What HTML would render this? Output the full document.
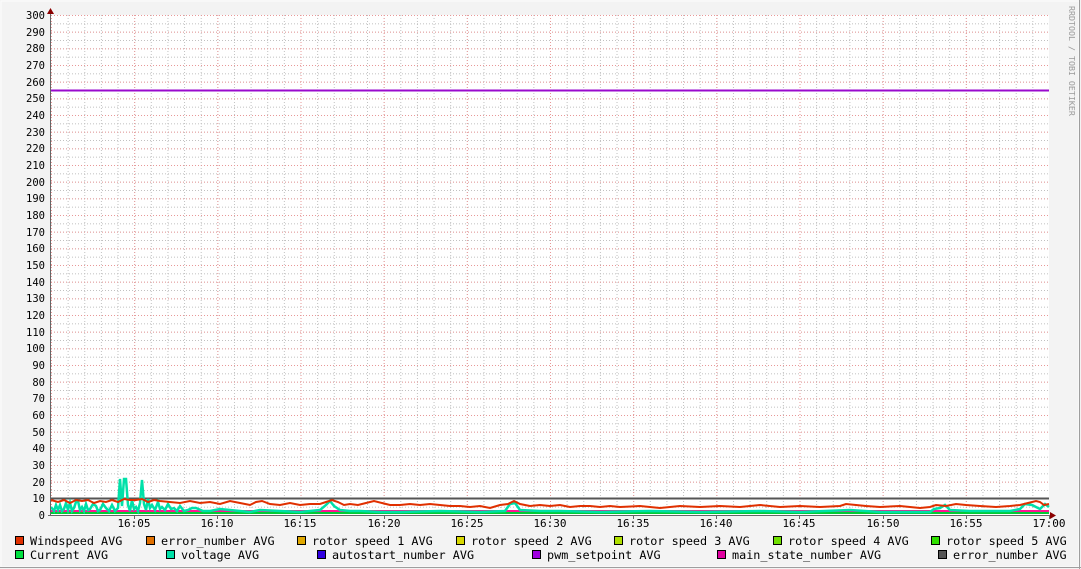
<!DOCTYPE html>
<html><head><meta charset="utf-8"><style>
html,body{margin:0;padding:0;background:#f3f3f3;}
svg{display:block;font-family:"DejaVu Sans Mono","Liberation Mono",monospace;}
</style></head><body>
<svg width="1081" height="569" xmlns="http://www.w3.org/2000/svg">
<defs>
<pattern id="hmin" x="0" y="15" width="1081" height="8.3333" patternUnits="userSpaceOnUse">
<line x1="0" y1="0.5" x2="1081" y2="0.5" stroke="#c0c0c0" stroke-width="1" stroke-dasharray="1,2"/>
</pattern>
<pattern id="vmin" x="51" y="0" width="16.633" height="600" patternUnits="userSpaceOnUse">
<line x1="0.5" y1="0" x2="0.5" y2="600" stroke="#c0c0c0" stroke-width="1" stroke-dasharray="1,2"/>
</pattern>
<pattern id="hmaj" x="0" y="15" width="1081" height="16.6667" patternUnits="userSpaceOnUse">
<line x1="0" y1="0.5" x2="1081" y2="0.5" stroke="#e89898" stroke-width="1" stroke-dasharray="1,2"/>
</pattern>
<pattern id="vmaj" x="51" y="0" width="83.167" height="600" patternUnits="userSpaceOnUse">
<line x1="0.5" y1="0" x2="0.5" y2="600" stroke="#e89898" stroke-width="1" stroke-dasharray="1,2"/>
</pattern>
</defs>
<rect x="0" y="0" width="1081" height="569" fill="#f3f3f3"/>
<rect x="1" y="1" width="1078" height="566" fill="none" stroke="#fcfcfc" stroke-width="1"/>
<line x1="1079.5" y1="0" x2="1079.5" y2="569" stroke="#9e9e9e"/>
<line x1="0" y1="567.5" x2="1081" y2="567.5" stroke="#9e9e9e"/>
<rect x="51" y="15" width="998" height="500" fill="#ffffff"/>
<rect x="51" y="15" width="998" height="500" fill="url(#hmin)"/>
<rect x="51" y="15" width="998" height="500" fill="url(#vmin)"/>
<rect x="51" y="15" width="998" height="500" fill="url(#hmaj)"/>
<rect x="51" y="15" width="998" height="500" fill="url(#vmaj)"/>
<line x1="51" y1="90.5" x2="1049" y2="90.5" stroke="#9a0acd" stroke-width="2"/>
<line x1="51" y1="498.5" x2="1049" y2="498.5" stroke="#555555" stroke-width="2"/>
<line x1="51" y1="513" x2="1049" y2="513" stroke="#00cc33" stroke-width="2"/>
<line x1="51" y1="511" x2="1049" y2="511" stroke="#ff1493" stroke-width="2"/>
<polyline fill="none" stroke="#00e0a8" stroke-width="2.5" points="51,507 54,511 56,505 58,510 60,505 62,511 64,509 66,503 68,510 70,503 72,511 74,508 76,502 78,501 80,510 82,507 84,511 86,504 88,510 90,509 93,504 96,506 98,511 100,510 103,504 106,508 109,511 112,505 115,511 118,508 120,479 122,506 124,479 126,479 128,505 130,511 132,500 134,509 136,507 138,511 140,503 142,480 144,504 146,510 148,499 150,508 152,505 155,510 158,502 160,509 162,507 165,510 168,504 171,509 174,508 177,511 180,506 184,511 188,510 192,508 196,508 203,511 210,511 220,509 230,510 240,511 250,512 260,510 280,511 300,512 310,511 320,510 326,505 330,501 334,506 340,510 350,511 360,511 380,512 400,512 440,511 480,512 505,511 510,504 515,503 520,510 540,511 560,511 600,512 650,511 700,512 760,511 800,512 850,510 880,512 930,512 934,509 940,508 945,505 950,510 970,511 990,511 1010,511 1020,509 1025,504 1032,505 1036,507 1040,509 1045,504 1049,507"/>
<polyline fill="none" stroke="#e03000" stroke-width="2" points="51,500 58,502 64,500 70,503 76,500 82,501 88,500 94,503 100,501 106,502 112,500 118,502 124,499 130,500 136,500 142,499 148,502 154,500 160,501 170,502 180,503 190,501 200,503 210,502 220,504 230,501 240,503 250,505 256,502 262,501 270,504 280,505 290,503 300,505 310,504 320,504 326,502 332,500 338,502 344,505 350,504 358,505 366,503 374,501 382,503 390,505 400,505 410,504 420,505 430,504 440,505 450,506 460,506 470,507 480,506 490,508 500,505 508,504 514,501 520,504 530,506 540,505 550,506 560,505 570,507 580,506 590,506 600,507 610,506 620,507 640,506 660,508 680,506 700,507 720,506 740,507 760,505 780,507 800,506 820,507 840,506 846,504 856,505 866,506 880,507 900,506 920,508 930,507 936,505 946,506 956,504 966,505 980,506 996,507 1010,506 1020,505 1028,503 1036,501 1040,502 1044,505 1049,504"/>
<line x1="50.5" y1="10" x2="50.5" y2="516" stroke="#666" stroke-width="1"/>
<line x1="48" y1="515.5" x2="1052" y2="515.5" stroke="#666" stroke-width="1"/>
<polygon points="47,14 54,14 50.5,8" fill="#8b0000"/>
<polygon points="1050,512 1050,519 1056,515.5" fill="#8b0000"/>
<g stroke="#666" stroke-width="1">
<line x1="134.5" y1="515" x2="134.5" y2="519"/><line x1="217.5" y1="515" x2="217.5" y2="519"/><line x1="300.5" y1="515" x2="300.5" y2="519"/><line x1="384.5" y1="515" x2="384.5" y2="519"/><line x1="467.5" y1="515" x2="467.5" y2="519"/><line x1="550.5" y1="515" x2="550.5" y2="519"/><line x1="633.5" y1="515" x2="633.5" y2="519"/><line x1="716.5" y1="515" x2="716.5" y2="519"/><line x1="799.5" y1="515" x2="799.5" y2="519"/><line x1="883.5" y1="515" x2="883.5" y2="519"/><line x1="966.5" y1="515" x2="966.5" y2="519"/><line x1="1049.5" y1="515" x2="1049.5" y2="519"/>
</g>
<g font-size="10.5" fill="#000" text-anchor="end">
<text x="45" y="19">300</text><text x="45" y="36">290</text><text x="45" y="52">280</text><text x="45" y="69">270</text><text x="45" y="86">260</text><text x="45" y="102">250</text><text x="45" y="119">240</text><text x="45" y="136">230</text><text x="45" y="152">220</text><text x="45" y="169">210</text><text x="45" y="186">200</text><text x="45" y="202">190</text><text x="45" y="219">180</text><text x="45" y="236">170</text><text x="45" y="252">160</text><text x="45" y="269">150</text><text x="45" y="286">140</text><text x="45" y="302">130</text><text x="45" y="319">120</text><text x="45" y="336">110</text><text x="45" y="352">100</text><text x="45" y="369">90</text><text x="45" y="386">80</text><text x="45" y="402">70</text><text x="45" y="419">60</text><text x="45" y="436">50</text><text x="45" y="452">40</text><text x="45" y="469">30</text><text x="45" y="486">20</text><text x="45" y="502">10</text><text x="45" y="519">0</text>
</g>
<g font-size="11" fill="#000" text-anchor="middle">
<text x="134" y="527">16:05</text><text x="217" y="527">16:10</text><text x="300" y="527">16:15</text><text x="384" y="527">16:20</text><text x="467" y="527">16:25</text><text x="550" y="527">16:30</text><text x="633" y="527">16:35</text><text x="716" y="527">16:40</text><text x="799" y="527">16:45</text><text x="883" y="527">16:50</text><text x="966" y="527">16:55</text><text x="1049" y="527">17:00</text>
</g>
<text x="1069" y="6" font-size="8.3" fill="#999" transform="rotate(90 1069 6)">RRDTOOL / TOBI OETIKER</text>
<g stroke="#000" stroke-width="1">
<rect x="15.5" y="536.5" width="8" height="8" fill="#e03000"/>
<rect x="146.5" y="536.5" width="8" height="8" fill="#e07000"/>
<rect x="297.5" y="536.5" width="8" height="8" fill="#e0a800"/>
<rect x="456.5" y="536.5" width="8" height="8" fill="#d8d800"/>
<rect x="614.5" y="536.5" width="8" height="8" fill="#b0e000"/>
<rect x="773.5" y="536.5" width="8" height="8" fill="#70e000"/>
<rect x="931.5" y="536.5" width="8" height="8" fill="#30e000"/>
<rect x="15.5" y="550.5" width="8" height="8" fill="#00e040"/>
<rect x="166.5" y="550.5" width="8" height="8" fill="#00e0a8"/>
<rect x="317.5" y="550.5" width="8" height="8" fill="#3000e0"/>
<rect x="532.5" y="550.5" width="8" height="8" fill="#a000e0"/>
<rect x="717.5" y="550.5" width="8" height="8" fill="#e000a0"/>
<rect x="938.5" y="550.5" width="8" height="8" fill="#555555"/>
</g>
<g font-size="11.8" fill="#000">
<text x="30" y="545">Windspeed AVG</text>
<text x="161" y="545">error_number AVG</text>
<text x="312" y="545">rotor speed 1 AVG</text>
<text x="471" y="545">rotor speed 2 AVG</text>
<text x="629" y="545">rotor speed 3 AVG</text>
<text x="788" y="545">rotor speed 4 AVG</text>
<text x="946" y="545">rotor speed 5 AVG</text>
<text x="30" y="559">Current AVG</text>
<text x="181" y="559">voltage AVG</text>
<text x="332" y="559">autostart_number AVG</text>
<text x="547" y="559">pwm_setpoint AVG</text>
<text x="732" y="559">main_state_number AVG</text>
<text x="953" y="559">error_number AVG</text>
</g>
</svg>
</body></html>
